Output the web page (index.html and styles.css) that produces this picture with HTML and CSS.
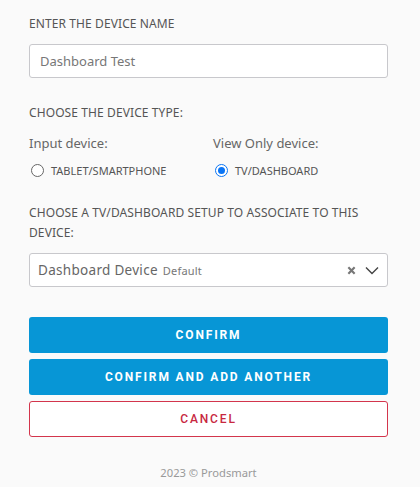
FILE: index.html
```html
<!DOCTYPE html>
<html>
<head>
<meta charset="utf-8">
<link rel="stylesheet" href="styles.css">
</head>
<body>
<div class="page">
  <div class="section">
    <div class="label">ENTER THE DEVICE NAME</div>
    <div class="input">Dashboard Test</div>
  </div>
  <div class="section type">
    <div class="label">CHOOSE THE DEVICE TYPE:</div>
    <div class="cols">
      <div class="col">
        <div class="sub">Input device:</div>
        <div class="radio-row"><span class="radio"></span><span class="opt">TABLET/SMARTPHONE</span></div>
      </div>
      <div class="col">
        <div class="sub">View Only device:</div>
        <div class="radio-row"><span class="radio checked"></span><span class="opt">TV/DASHBOARD</span></div>
      </div>
    </div>
  </div>
  <div class="section setup">
    <div class="label tall">CHOOSE A TV/DASHBOARD SETUP TO ASSOCIATE TO THIS DEVICE:</div>
    <div class="select">
      <span class="val">Dashboard Device</span><span class="def">Default</span>
      <span class="icons">
        <svg width="9" height="9" viewBox="0 0 10 10"><path d="M1.5 1.5L8.5 8.5M8.5 1.5L1.5 8.5" stroke="#777" stroke-width="2.4"/></svg>
        <svg width="14" height="9" viewBox="0 0 14 9"><path d="M1 1.5L7 7.5L13 1.5" stroke="#444" stroke-width="1.4" fill="none"/></svg>
      </span>
    </div>
  </div>
  <div class="buttons">
    <div class="btn primary">CONFIRM</div>
    <div class="btn primary">CONFIRM AND ADD ANOTHER</div>
    <div class="btn cancel">CANCEL</div>
  </div>
  <div class="footer">2023 © Prodsmart</div>
</div>
</body>
</html>
```
FILE: styles.css
```css
html, body { margin: 0; padding: 0; background: #fafafa; }
body { font-family: "Noto Sans", "Open Sans", sans-serif; width: 420px; height: 487px; overflow: hidden; }
.page { padding: 15px 32px 0 29px; }
.label { font-size: 12px; color: #555; line-height: 18px; letter-spacing: 0.1px; }
.label.tall { line-height: 20px; }
.input { margin-top: 11px; height: 32px; border: 1px solid #c8c8cc; border-radius: 3px; background: #fff; font-size: 13px; color: #777; line-height: 32px; padding-left: 10px; }
.type { margin-top: 26px; }
.cols { display: flex; margin-top: 12px; }
.col { width: 184px; flex-shrink: 0; }
.col + .col { width: auto; flex: 1; }
.sub { font-size: 13px; color: #666; line-height: 18px; }
.radio-row { display: flex; align-items: center; margin-top: 10px; height: 16px; }
.radio { width: 11px; height: 11px; border: 1px solid #666; border-radius: 50%; background: #fff; margin-left: 2px; margin-right: 7px; box-sizing: content-box; position: relative; }
.radio.checked { border-color: #0a75f5; }
.radio.checked::after { content: ""; position: absolute; left: 2px; top: 2px; width: 7px; height: 7px; border-radius: 50%; background: #0a75f5; }
.opt { font-size: 11px; color: #555; }
.setup { margin-top: 25px; }
.select { margin-top: 10px; height: 32px; border: 1px solid #c8c8cc; border-radius: 3px; background: #fff; display: flex; align-items: center; padding-left: 8px; padding-right: 8px; }
.val { font-size: 13.5px; color: #666; letter-spacing: 0.3px; }
.def { font-size: 11px; color: #777; margin-left: 5px; margin-top: 1px; letter-spacing: 0.2px; }
.icons { margin-left: auto; display: flex; align-items: center; gap: 9px; }
.buttons { margin-top: 30px; display: flex; flex-direction: column; gap: 6px; }
.btn { height: 36px; border-radius: 3px; display: flex; align-items: center; justify-content: center; font-family: Roboto, sans-serif; font-weight: 700; font-size: 12px; letter-spacing: 1.85px; box-sizing: border-box; }
.primary { background: #0796d6; color: #fff; }
.cancel { background: #fff; border: 1px solid #d3354c; color: #c8283f; font-weight: 500; }
.footer { text-align: center; margin-top: 28px; font-size: 11.2px; color: #999; font-family: "Noto Sans", sans-serif; }
```
